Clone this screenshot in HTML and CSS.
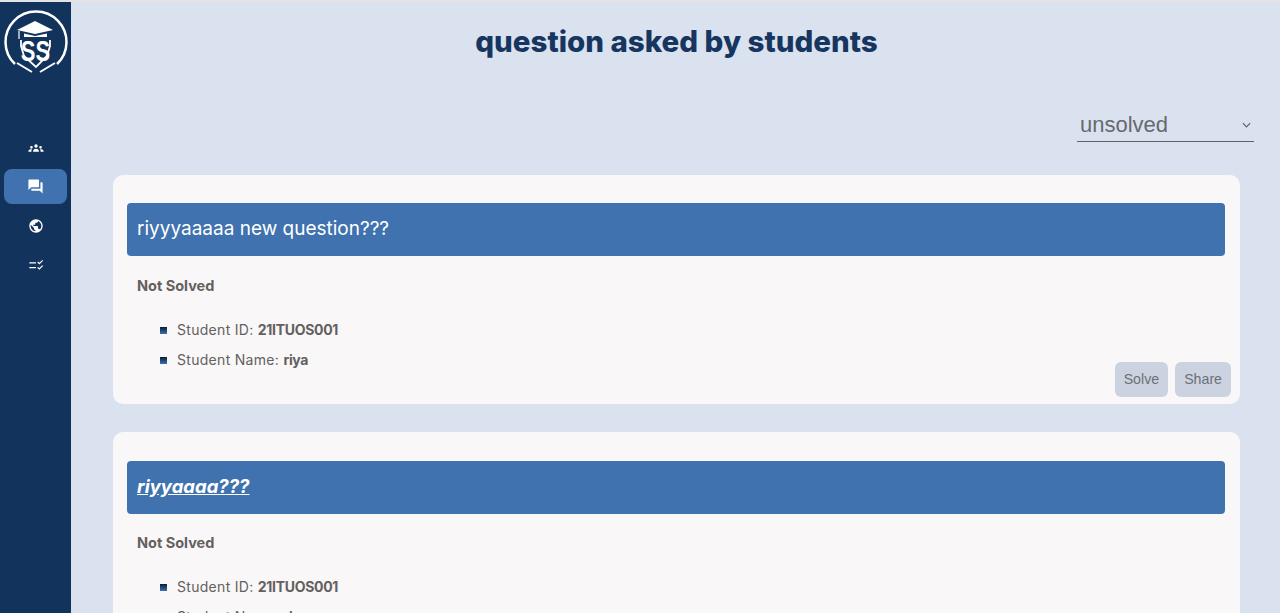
FILE: index.html
```html
<!DOCTYPE html>
<html lang="en">
<head>
    <meta charset="UTF-8">
    <title>Questions</title>
    <meta name="viewport" content="width=device-width, initial-scale=1.0">
    <link rel="stylesheet" href="styles.css">
</head>
<body>
    <div class="app">
        <aside class="sidebar">
            <svg class="logo" viewBox="0 2 71 74" width="71" height="74">
                <path d="M15 64 A30.500 30.500 0 1 1 57 64" fill="none" stroke="#fff" stroke-width="2.500"/>
                <path d="M35 21 L53 30 L35 34 L17 30 Z" fill="#fff"/>
                <path d="M19 31 V39" stroke="#fff" stroke-width="1.200"/>
                <path d="M24 33.500 L35 36 L47 33.500 V37 H24 Z" fill="#fff"/>
                <path d="M21 40 V46 L24 56 L36 67 L47 56 L50 46 V40" fill="none" stroke="#fff" stroke-width="1.800"/>
                <text class="logo-text" transform="translate(35.500 61) scale(1 1.350)" text-anchor="middle">SS</text>
                <path d="M17 63 L32 72 M55 63 L40 72" stroke="#fff" stroke-width="2"/>
            </svg>
            <nav class="nav">
                <a class="nav-item">
                    <svg viewBox="0 0 24 24" width="16" height="16"><path fill="#fff" d="M12 6.500a2.600 2.600 0 1 1 0 5.200 2.600 2.600 0 0 1 0-5.200zM5.200 9a2 2 0 1 1 0 4 2 2 0 0 1 0-4zm13.600 0a2 2 0 1 1 0 4 2 2 0 0 1 0-4zM7.500 17.500c0-2.600 2-4.500 4.500-4.500s4.500 1.900 4.500 4.500zM0.500 17.500c0-2 1.500-3.500 3.500-3.500h2c-.6.900-.9 2.200-.9 3.500zm23 0h-4.600c0-1.300-.3-2.600-.9-3.500h2c2 0 3.500 1.500 3.500 3.500z"/></svg>
                </a>
                <a class="nav-item active">
                    <svg viewBox="0 0 24 24" width="17" height="17"><path fill="#fff" d="M21 6h-2v9H6v2c0 .55.45 1 1 1h11l4 4V7c0-.55-.45-1-1-1zm-4 6V3c0-.55-.45-1-1-1H3c-.55 0-1 .45-1 1v14l4-4h10c.55 0 1-.45 1-1z"/></svg>
                </a>
                <a class="nav-item">
                    <svg viewBox="0 0 24 24" width="16" height="16"><path fill="#fff" d="M12 2C6.480 2 2 6.480 2 12s4.480 10 10 10 10-4.480 10-10S17.520 2 12 2zm-1 17.930c-3.950-.49-7-3.850-7-7.930 0-.62.08-1.210.21-1.790L9 15v1c0 1.100.9 2 2 2v1.930zm6.900-2.540c-.26-.81-1-1.390-1.900-1.390h-1v-3c0-.55-.45-1-1-1H8v-2h2c.55 0 1-.45 1-1V7h2c1.100 0 2-.9 2-2v-.41c2.930 1.190 5 4.060 5 7.410 0 2.080-.8 3.970-2.100 5.390z"/></svg>
                </a>
                <a class="nav-item">
                    <svg viewBox="0 0 24 24" width="16" height="16"><path fill="#fff" d="M2 8h10v1.800H2zM2 15h10v1.800H2z"/><path fill="none" stroke="#fff" stroke-width="1.800" d="M14.500 7.500l2.500 2.500L22 5M14.500 15.500l2.500 2.500L22 13"/></svg>
                </a>
            </nav>
        </aside>

        <main class="content">
            <h1 class="page-title">question asked by students</h1>

            <div class="filter-row">
                <div class="filter">
                    <span>unsolved</span>
                    <svg viewBox="0 0 10 6" width="9" height="6"><path d="M1 1l4 4 4-4" fill="none" stroke="#5f6368" stroke-width="1.300"/></svg>
                </div>
            </div>

            <section class="card">
                <div class="card-title">riyyyaaaaa new question???</div>
                <p class="status">Not Solved</p>
                <ul class="info">
                    <li>Student ID: <b>21ITUOS001</b></li>
                    <li>Student Name: <b>riya</b></li>
                </ul>
                <div class="actions">
                    <button>Solve</button>
                    <button>Share</button>
                </div>
            </section>

            <section class="card">
                <div class="card-title emphasis">riyyaaaa???</div>
                <p class="status">Not Solved</p>
                <ul class="info">
                    <li>Student ID: <b>21ITUOS001</b></li>
                    <li>Student Name: <b>riya</b></li>
                </ul>
                <div class="actions">
                    <button>Solve</button>
                    <button>Share</button>
                </div>
            </section>
        </main>
    </div>
</body>
</html>
```

FILE: styles.css
```css
html, body { height: 100%; }
body { margin: 0; overflow: hidden; font-family: Inter, "Open Sans", sans-serif; background: #dbe2ef; border-top: 2px solid #e4e4e6; box-sizing: border-box; }
.app { display: flex; height: 100%; }

.sidebar { width: 71px; flex-shrink: 0; background: #12335b; display: flex; flex-direction: column; align-items: center; }
.logo { display: block; }
.logo-text { font-family: "Liberation Sans", sans-serif; font-weight: 700; font-size: 22px; fill: #fff; }
.nav { width: 100%; margin-top: 54px; display: flex; flex-direction: column; align-items: center; }
.nav-item { width: 63px; height: 35px; margin-bottom: 4px; border-radius: 8px; display: flex; align-items: center; justify-content: center; }
.nav-item.active { background: #3f72af; }

.content { flex: 1; min-width: 0; padding: 0 26px 0 42px; }
.page-title { margin: 21px 14px 0 0; text-align: center; font-size: 29.500px; line-height: 36px; font-weight: 800; color: #16365f; }

.filter-row { display: flex; justify-content: flex-end; margin-top: 47px; }
.filter { width: 177px; height: 36px; box-sizing: border-box; padding: 2px 3px 0; border-bottom: 1px solid #5f6368; display: flex; align-items: center; justify-content: space-between; color: #666a70; font-family: "Liberation Sans", sans-serif; font-size: 22px; }

.card { position: relative; background: #f9f7f7; border-radius: 10px; padding: 28px 15px 0 14px; height: 229px; box-sizing: border-box; margin: 33px 14px 28px 0; }
.card + .card { margin-top: 28px; padding-top: 29px; }
.card-title { background: #3f72af; color: #fff; border-radius: 4px; height: 53px; line-height: 51px; padding-left: 10px; font-size: 19px; }
.card-title.emphasis { font-size: 18.500px; font-weight: 700; font-style: italic; text-decoration: underline; }
.status { margin: 20px 0 0 10px; font-size: 14.500px; line-height: 20px; font-weight: 700; color: #636060; }
.card + .card .status { margin-top: 19px; }
.info { list-style: none; margin: 24px 0 0 33px; padding: 0; color: #636060; font-size: 14px; letter-spacing: .3px; }
.info li { height: 30px; line-height: 20px; display: flex; align-items: baseline; white-space: pre; }
.info li::before { content: ""; width: 7px; height: 7px; margin-right: 10px; background: linear-gradient(#0b1a33, #3f72af); align-self: flex-start; margin-top: 7px; }
.info b { letter-spacing: -.3px; }
.actions { position: absolute; right: 9px; bottom: 7px; display: flex; gap: 7px; }
.actions button { height: 35px; padding: 0 9px 1px; border: none; border-radius: 6px; background: #ccd3e0; color: #6b7078; font-family: "Liberation Sans", sans-serif; font-size: 14.200px; }
```
